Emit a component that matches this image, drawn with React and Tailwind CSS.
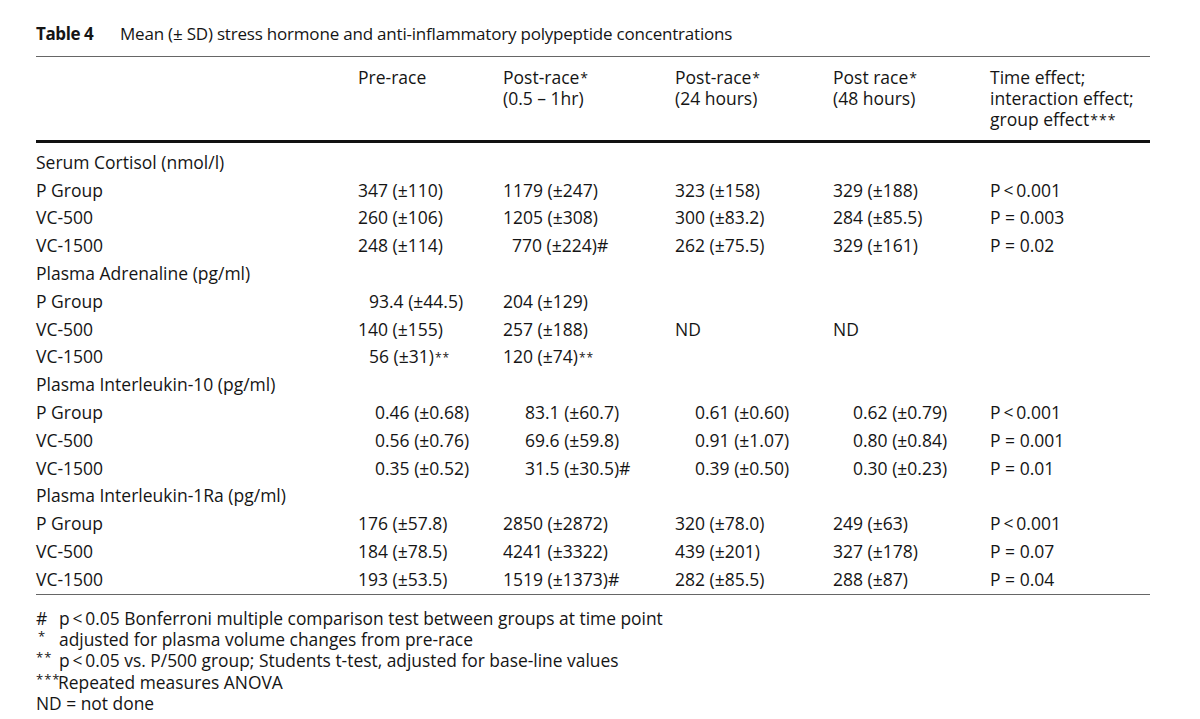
const Ast = ({ n = 1, big = false }) => (
  <sup
    className={
      big
        ? 'text-[14px] relative top-[-1px] ml-[1px] tracking-[1px]'
        : 'text-[12px] relative top-[-1px] ml-[1px] tracking-[1px]'
    }
  >
    {'*'.repeat(n)}
  </sup>
);

const sections = [
  {
    title: 'Serum Cortisol (nmol/l)',
    rows: [
      ['P Group', ['347 (±110)', 0], ['1179 (±247)', 0], ['323 (±158)', 0], ['329 (±188)', 0], 'P\u2009<\u20090.001'],
      ['VC-500', ['260 (±106)', 0], ['1205 (±308)', 0], ['300 (±83.2)', 0], ['284 (±85.5)', 0], 'P = 0.003'],
      ['VC-1500', ['248 (±114)', 0], ['770 (±224)#', 9], ['262 (±75.5)', 0], ['329 (±161)', 0], 'P = 0.02'],
    ],
  },
  {
    title: 'Plasma Adrenaline (pg/ml)',
    rows: [
      ['P Group', ['93.4 (±44.5)', 11], ['204 (±129)', 0], null, null, ''],
      ['VC-500', ['140 (±155)', 0], ['257 (±188)', 0], ['ND', 0], ['ND', 0], ''],
      ['VC-1500', ['56 (±31)', 11, 2], ['120 (±74)', 0, 2], null, null, ''],
    ],
  },
  {
    title: 'Plasma Interleukin-10 (pg/ml)',
    rows: [
      ['P Group', ['0.46 (±0.68)', 17], ['83.1 (±60.7)', 22], ['0.61 (±0.60)', 20], ['0.62 (±0.79)', 20], 'P\u2009<\u20090.001'],
      ['VC-500', ['0.56 (±0.76)', 17], ['69.6 (±59.8)', 22], ['0.91 (±1.07)', 20], ['0.80 (±0.84)', 20], 'P = 0.001'],
      ['VC-1500', ['0.35 (±0.52)', 17], ['31.5 (±30.5)#', 22], ['0.39 (±0.50)', 20], ['0.30 (±0.23)', 20], 'P = 0.01'],
    ],
  },
  {
    title: 'Plasma Interleukin-1Ra (pg/ml)',
    rows: [
      ['P Group', ['176 (±57.8)', 0], ['2850 (±2872)', 0], ['320 (±78.0)', 0], ['249 (±63)', 0], 'P\u2009<\u20090.001'],
      ['VC-500', ['184 (±78.5)', 0], ['4241 (±3322)', 0], ['439 (±201)', 0], ['327 (±178)', 0], 'P = 0.07'],
      ['VC-1500', ['193 (±53.5)', 0], ['1519 (±1373)#', 0], ['282 (±85.5)', 0], ['288 (±87)', 0], 'P = 0.04'],
    ],
  },
];

const GRID = 'grid grid-cols-[322px_145px_172px_158px_157px_160px]';

function Cell({ v }) {
  if (!v) return <div />;
  const [text, pad, ast] = v;
  return (
    <div className="whitespace-nowrap" style={{ paddingLeft: pad }}>
      {text}
      {ast ? <Ast n={ast} /> : null}
    </div>
  );
}

export default function App() {
  return (
    <div className="w-[1200px] h-[719px] bg-white text-[#151515] font-['Open_Sans',sans-serif] text-[17.5px] leading-[24px]">
      <div className="w-[1114px] ml-[36px] pt-[22px]">
        <div className="flex h-[24px] items-center text-[17px]">
          <span className="font-bold w-[84px] whitespace-nowrap tracking-[-0.4px]">Table 4</span>
          <span className="whitespace-nowrap tracking-[-0.2px]">Mean (± SD) stress hormone and anti-inflammatory polypeptide concentrations</span>
        </div>
        <div className="mt-[10px] h-px bg-[#666]" />
        <div className={`${GRID} pt-[10px] pb-[10px] leading-[21px]`}>
          <div />
          <div>Pre-race</div>
          <div>
            Post-race<Ast big />
            <br />
            (0.5 – 1hr)
          </div>
          <div>
            Post-race<Ast big />
            <br />
            (24 hours)
          </div>
          <div>
            Post race<Ast big />
            <br />
            (48 hours)
          </div>
          <div>
            Time effect;
            <br />
            interaction effect;
            <br />
            group effect<Ast n={3} big />
          </div>
        </div>
        <div className="h-[3px] bg-[#111]" />
        <div className="pt-[5px] pb-[1px]">
          {sections.map((s) => (
            <div key={s.title}>
              <div className="h-[27.8px] flex items-center whitespace-nowrap">{s.title}</div>
              {s.rows.map((r, i) => (
                <div key={i} className={`${GRID} h-[27.8px] items-center`}>
                  <div>{r[0]}</div>
                  <Cell v={r[1]} />
                  <Cell v={r[2]} />
                  <Cell v={r[3]} />
                  <Cell v={r[4]} />
                  <div className="whitespace-nowrap">{r[5]}</div>
                </div>
              ))}
            </div>
          ))}
        </div>
        <div className="h-px bg-[#666]" />
        <div className="pt-[13px] text-[17.4px] leading-[21.3px]">
          <div className="flex h-[21.3px] items-center">
            <span className="w-[23px]">#</span>
            <span className="whitespace-nowrap">p&#8201;&lt;&#8201;0.05 Bonferroni multiple comparison test between groups at time point</span>
          </div>
          <div className="flex h-[21.3px] items-center">
            <span className="w-[23px] pl-[2px] text-[13px] leading-[21.3px] relative top-[-3px]">*</span>
            <span className="whitespace-nowrap">adjusted for plasma volume changes from pre-race</span>
          </div>
          <div className="flex h-[21.3px] items-center">
            <span className="w-[23px] text-[13px] leading-[21.3px] tracking-[1px] relative top-[-3px]">**</span>
            <span className="whitespace-nowrap">p&#8201;&lt;&#8201;0.05 vs. P/500 group; Students t-test, adjusted for base-line values</span>
          </div>
          <div className="flex h-[21.3px] items-center">
            <span className="w-[22px] text-[13px] leading-[21.3px] tracking-[1px] relative top-[-3px]">***</span>
            <span className="whitespace-nowrap">Repeated measures ANOVA</span>
          </div>
          <div className="flex h-[21.3px] items-center whitespace-nowrap">ND = not done</div>
        </div>
      </div>
    </div>
  );
}
